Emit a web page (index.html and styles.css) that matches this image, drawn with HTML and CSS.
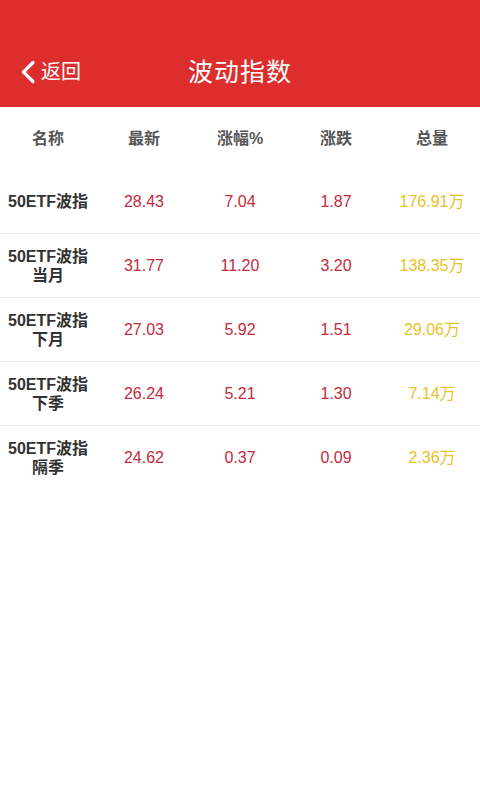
FILE: index.html
```html
<!DOCTYPE html>
<html lang="zh-CN">
<head>
  <meta charset="UTF-8">
  <title>波动指数</title>
  <link rel="stylesheet" href="styles.css">
</head>
<body>
  <header class="topbar">
    <a class="back" href="#">
      <svg class="back-icon" width="17" height="24" viewBox="0 0 17 24">
        <path d="M14 2.5 L4.5 12 L14 21.5" fill="none" stroke="#fff" stroke-width="3.2" stroke-linecap="round" stroke-linejoin="round"/>
      </svg>
      <span>返回</span>
    </a>
    <h1 class="title">波动指数</h1>
  </header>

  <div class="quote-table">
    <div class="row head">
      <div>名称</div>
      <div>最新</div>
      <div>涨幅%</div>
      <div>涨跌</div>
      <div>总量</div>
    </div>
    <div class="row">
      <div class="name">50ETF波指</div>
      <div class="up">28.43</div>
      <div class="up">7.04</div>
      <div class="up">1.87</div>
      <div class="vol">176.91万</div>
    </div>
    <div class="row">
      <div class="name">50ETF波指<br>当月</div>
      <div class="up">31.77</div>
      <div class="up">11.20</div>
      <div class="up">3.20</div>
      <div class="vol">138.35万</div>
    </div>
    <div class="row">
      <div class="name">50ETF波指<br>下月</div>
      <div class="up">27.03</div>
      <div class="up">5.92</div>
      <div class="up">1.51</div>
      <div class="vol">29.06万</div>
    </div>
    <div class="row">
      <div class="name">50ETF波指<br>下季</div>
      <div class="up">26.24</div>
      <div class="up">5.21</div>
      <div class="up">1.30</div>
      <div class="vol">7.14万</div>
    </div>
    <div class="row last">
      <div class="name">50ETF波指<br>隔季</div>
      <div class="up">24.62</div>
      <div class="up">0.37</div>
      <div class="up">0.09</div>
      <div class="vol">2.36万</div>
    </div>
  </div>
</body>
</html>
```

FILE: styles.css
```css
body {
  margin: 0;
  background: #fff;
  font-family: "Liberation Sans", "Noto Sans CJK SC", sans-serif;
  height: 100vh;
  overflow: hidden;
}
.topbar {
  position: relative;
  height: 107px;
  background: #de2d2d;
  display: flex;
  align-items: center;
  justify-content: center;
  padding-top: 36px;
  box-sizing: border-box;
}
.back {
  position: absolute;
  left: 19px;
  top: 60px;
  display: flex;
  align-items: center;
  gap: 5px;
  color: #fff;
  text-decoration: none;
  font-size: 20px;
  line-height: 24px;
}
.title {
  margin: 0;
  color: #fff;
  font-size: 25px;
  font-weight: normal;
  line-height: 32px;
  letter-spacing: 1px;
}
.row {
  display: grid;
  grid-template-columns: repeat(5, 1fr);
  align-items: center;
  height: 63px;
  border-bottom: 1px solid #ececec;
  text-align: center;
  font-size: 16px;
  line-height: 19px;
}
.row.head {
  height: 63px;
  border-bottom: none;
  color: #555;
  font-size: 16px;
  font-weight: bold;
}
.row.last {
  border-bottom: none;
}
.name {
  color: #333;
  font-weight: bold;
  font-size: 16px;
}
.up {
  color: #c42a3c;
}
.vol {
  color: #e6c229;
}
```
